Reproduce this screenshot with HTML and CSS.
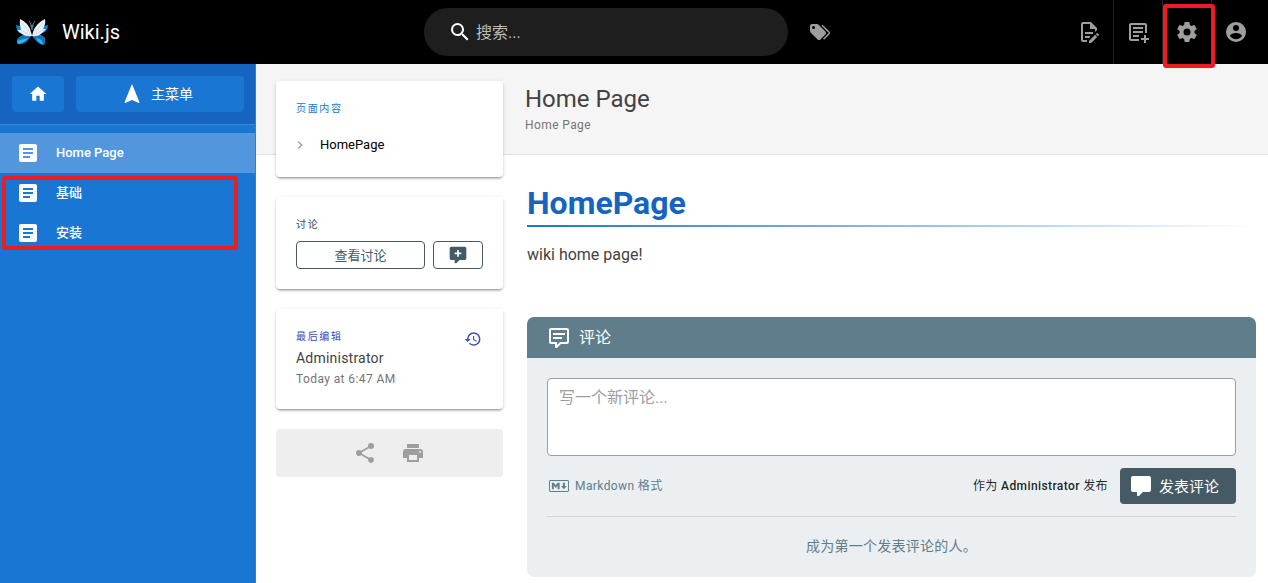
FILE: index.html
```html
<!DOCTYPE html>
<html lang="zh">
<head>
  <meta charset="UTF-8">
  <title>Home Page | Wiki.js</title>
  <link rel="stylesheet" href="styles.css">
</head>
<body>
  <!-- top bar -->
  <header class="topbar">
    <div class="brand">
      <svg class="logo" viewBox="0 0 34 28">
        <path fill="#0288d1" d="M1 7L5 8L14 17L4 15Q1 11 1 7M33 7L29 8L20 17L30 14Q33 11 33 7"/>
        <path fill="#1671b8" d="M17 16Q10 14 2 21Q1 24 3 26Q12 27 17 16M17 17Q25 14 30 20Q31 24 29 27Q21 26 17 17"/>
        <path fill="#29b6f6" d="M13 20Q8 21 2 23L3 26Q10 25 13 20M21 20Q28 21 28 26L29 27Q24 26 21 20"/>
        <path fill="#eceff5" d="M5 1Q14 5 16 14L17 18Q11 19 7 16L2 12L6 12Q4 6 5 1M30 1Q21 5 18 14L17 18Q23 19 27 15L31 11L28 11Q31 6 30 1"/>
        <path fill="none" stroke="#c3cbda" stroke-width=".6" d="M7 5L15 15M5 12L15 17M28 5L19 15M29 11L19 17"/>
        <path fill="none" stroke="#607d8b" stroke-width="1" d="M14 3L16 6L17 12L18 6L20 3M15 8L19 8"/>
      </svg>
      <span>Wiki.js</span>
    </div>
    <div class="search">
      <svg class="icon" viewBox="0 0 24 24"><path d="M9.5,3A6.5,6.5 0 0,1 16,9.5C16,11.11 15.41,12.59 14.44,13.73L14.71,14H15.5L20.5,19L19,20.5L14,15.5V14.71L13.73,14.44C12.59,15.41 11.11,16 9.5,16A6.5,6.5 0 0,1 3,9.5A6.5,6.5 0 0,1 9.5,3M9.5,5C7,5 5,7 5,9.5C5,12 7,14 9.5,14C12,14 14,12 14,9.5C14,7 12,5 9.5,5Z"/></svg>
      <span>搜索...</span>
    </div>
    <svg class="icon tags" viewBox="0 0 24 24"><path d="M5.5,9A1.5,1.5 0 0,0 7,7.5A1.5,1.5 0 0,0 5.5,6A1.5,1.5 0 0,0 4,7.5A1.5,1.5 0 0,0 5.5,9M17.41,11.58C17.77,11.94 18,12.44 18,13C18,13.55 17.78,14.05 17.41,14.41L12.41,19.41C12.05,19.77 11.55,20 11,20C10.45,20 9.95,19.78 9.58,19.41L2.59,12.42C2.22,12.05 2,11.55 2,11V6C2,4.89 2.89,4 4,4H9C9.55,4 10.05,4.22 10.41,4.58L17.41,11.58M13.54,5.71L14.54,4.71L21.41,11.58C21.78,11.94 22,12.45 22,13C22,13.55 21.78,14.05 21.42,14.41L16.04,19.79L15.04,18.79L20.75,13L13.54,5.71Z"/></svg>
    <nav class="actions">
      <a><svg class="icon" viewBox="0 0 24 24"><path d="M8,12H16V14H8V12M10,20H6V4H13V9H18V12.1L20,10.1V8L14,2H6A2,2 0 0,0 4,4V20A2,2 0 0,0 6,22H10V20M8,18H12.1L13,17.1V16H8V18M20.2,13C20.3,13 20.5,13.1 20.6,13.2L21.9,14.5C22.1,14.7 22.1,15.1 21.9,15.3L20.9,16.3L18.8,14.2L19.8,13.2C19.9,13.1 20,13 20.2,13M20.2,16.9L14.1,23H12V20.9L18.1,14.8L20.2,16.9Z"/></svg></a>
      <a><svg class="icon" viewBox="0 0 24 24"><path d="M13 17H7V15H13V17M17 9H7V7H17V9M17 13H7V11H17V13M19 3H5C3.9 3 3 3.9 3 5V19C3 20.1 3.9 21 5 21H13V19H5V5H19V13H21V5C21 3.9 20.1 3 19 3M20 18V15H18V18H15V20H18V23H20V20H23V18H20Z"/></svg></a>
      <a class="settings"><svg class="icon" viewBox="0 0 24 24"><path d="M12,15.5A3.5,3.5 0 0,1 8.5,12A3.5,3.5 0 0,1 12,8.5A3.5,3.5 0 0,1 15.5,12A3.5,3.5 0 0,1 12,15.5M19.43,12.97C19.47,12.65 19.5,12.33 19.5,12C19.5,11.67 19.47,11.34 19.43,11L21.54,9.37C21.73,9.22 21.78,8.95 21.66,8.73L19.66,5.27C19.54,5.05 19.27,4.96 19.05,5.05L16.56,6.05C16.04,5.66 15.5,5.32 14.87,5.07L14.5,2.42C14.46,2.18 14.25,2 14,2H10C9.75,2 9.54,2.18 9.5,2.42L9.13,5.07C8.5,5.32 7.96,5.66 7.44,6.05L4.95,5.05C4.73,4.96 4.46,5.05 4.34,5.27L2.34,8.73C2.21,8.95 2.27,9.22 2.46,9.37L4.57,11C4.53,11.34 4.5,11.67 4.5,12C4.5,12.33 4.53,12.65 4.57,12.97L2.46,14.63C2.27,14.78 2.21,15.05 2.34,15.27L4.34,18.73C4.46,18.95 4.73,19.03 4.95,18.95L7.44,17.94C7.96,18.34 8.5,18.68 9.13,18.93L9.5,21.58C9.54,21.82 9.75,22 10,22H14C14.25,22 14.46,21.82 14.5,21.58L14.87,18.93C15.5,18.67 16.04,18.34 16.56,17.94L19.05,18.95C19.27,19.03 19.54,18.95 19.66,18.73L21.66,15.27C21.78,15.05 21.73,14.78 21.54,14.63L19.43,12.97Z"/></svg><span class="mark mark-settings"></span></a>
      <a><svg class="icon" viewBox="0 0 24 24"><path d="M12,19.2C9.5,19.2 7.29,17.92 6,16C6.03,14 10,12.9 12,12.9C14,12.9 17.97,14 18,16C16.71,17.92 14.5,19.2 12,19.2M12,5A3,3 0 0,1 15,8A3,3 0 0,1 12,11A3,3 0 0,1 9,8A3,3 0 0,1 12,5M12,2A10,10 0 0,0 2,12A10,10 0 0,0 12,22A10,10 0 0,0 22,12C22,6.47 17.5,2 12,2Z"/></svg></a>
    </nav>
  </header>

  <div class="layout">
    <!-- left navigation -->
    <aside class="sidebar">
      <div class="sidebar-head">
        <a class="nav-btn home"><svg class="icon" viewBox="0 0 24 24"><path d="M10,20V14H14V20H19V12H22L12,3L2,12H5V20H10Z"/></svg></a>
        <a class="nav-btn menu"><svg class="icon" viewBox="0 0 24 24"><path d="M12,2L4.5,20.29L5.21,21L12,18L18.79,21L19.5,20.29L12,2Z"/></svg><span>主菜单</span></a>
      </div>
      <div class="nav-list">
        <a class="nav-item active"><svg class="icon" viewBox="0 0 24 24"><path d="M14,17H7V15H14M17,13H7V11H17M17,9H7V7H17M19,3H5C3.89,3 3,3.89 3,5V19A2,2 0 0,0 5,21H19A2,2 0 0,0 21,19V5C21,3.89 20.1,3 19,3Z"/></svg><span>Home Page</span></a>
        <a class="nav-item"><svg class="icon" viewBox="0 0 24 24"><path d="M14,17H7V15H14M17,13H7V11H17M17,9H7V7H17M19,3H5C3.89,3 3,3.89 3,5V19A2,2 0 0,0 5,21H19A2,2 0 0,0 21,19V5C21,3.89 20.1,3 19,3Z"/></svg><span>基础</span></a>
        <a class="nav-item"><svg class="icon" viewBox="0 0 24 24"><path d="M14,17H7V15H14M17,13H7V11H17M17,9H7V7H17M19,3H5C3.89,3 3,3.89 3,5V19A2,2 0 0,0 5,21H19A2,2 0 0,0 21,19V5C21,3.89 20.1,3 19,3Z"/></svg><span>安装</span></a>
        <span class="mark mark-nav"></span>
      </div>
    </aside>

    <main class="page">
      <div class="page-header">
        <h2>Home Page</h2>
        <p>Home Page</p>
      </div>
      <div class="page-body">
        <!-- page info cards -->
        <div class="page-side">
          <div class="card toc">
            <div class="overline blue">页面内容</div>
            <div class="toc-item"><svg class="icon" viewBox="0 0 24 24"><path d="M8.59,16.58L13.17,12L8.59,7.41L10,6L16,12L10,18L8.59,16.58Z"/></svg><span>HomePage</span></div>
          </div>
          <div class="card talk">
            <div class="overline grey">讨论</div>
            <div class="talk-buttons">
              <a class="outlined view">查看讨论</a>
              <a class="outlined add"><svg class="icon" viewBox="0 0 24 24"><path d="M9,22A1,1 0 0,1 8,21V18H4A2,2 0 0,1 2,16V4C2,2.89 2.9,2 4,2H20A2,2 0 0,1 22,4V16A2,2 0 0,1 20,18H13.9L10.2,21.71C10,21.9 9.75,22 9.5,22H9M11,6V9H8V11H11V14H13V11H16V9H13V6H11Z"/></svg></a>
            </div>
          </div>
          <div class="card edited">
            <div>
              <div class="overline indigo">最后编辑</div>
              <div class="author">Administrator</div>
              <div class="date">Today at 6:47 AM</div>
            </div>
            <svg class="icon" viewBox="0 0 24 24"><path d="M13.5,8H12V13L16.28,15.54L17,14.33L13.5,12.25V8M13,3A9,9 0 0,0 4,12H1L4.96,16.03L9,12H6A7,7 0 0,1 13,5A7,7 0 0,1 20,12A7,7 0 0,1 13,19C11.07,19 9.32,18.21 8.06,16.94L6.64,18.36C8.27,20 10.5,21 13,21A9,9 0 0,0 22,12A9,9 0 0,0 13,3"/></svg>
          </div>
          <div class="share">
            <svg class="icon" viewBox="0 0 24 24"><path d="M18,16.08C17.24,16.08 16.56,16.38 16.04,16.85L8.91,12.7C8.96,12.47 9,12.24 9,12C9,11.76 8.96,11.53 8.91,11.3L15.96,7.19C16.5,7.69 17.21,8 18,8A3,3 0 0,0 21,5A3,3 0 0,0 18,2A3,3 0 0,0 15,5C15,5.24 15.04,5.47 15.09,5.7L8.04,9.81C7.5,9.31 6.79,9 6,9A3,3 0 0,0 3,12A3,3 0 0,0 6,15C6.79,15 7.5,14.69 8.04,14.19L15.16,18.34C15.11,18.55 15.08,18.77 15.08,19C15.08,20.61 16.39,21.91 18,21.91C19.61,21.91 20.92,20.61 20.92,19A2.92,2.92 0 0,0 18,16.08Z"/></svg>
            <svg class="icon" viewBox="0 0 24 24"><path d="M18,3H6V7H18M19,12A1,1 0 0,1 18,11A1,1 0 0,1 19,10A1,1 0 0,1 20,11A1,1 0 0,1 19,12M16,19H8V14H16M19,8H5A3,3 0 0,0 2,11V17H6V21H18V17H22V11A3,3 0 0,0 19,8Z"/></svg>
          </div>
        </div>

        <div class="content">
          <h1>HomePage</h1>
          <p class="text">wiki home page!</p>

          <!-- comments -->
          <section class="comments">
            <div class="comments-head">
              <svg class="icon" viewBox="0 0 24 24"><path d="M9,22A1,1 0 0,1 8,21V18H4A2,2 0 0,1 2,16V4C2,2.89 2.9,2 4,2H20A2,2 0 0,1 22,4V16A2,2 0 0,1 20,18H13.9L10.2,21.71C10,21.9 9.75,22 9.5,22H9M10,16V19.08L13.08,16H20V4H4V16H10M6,7H18V9H6V7M6,11H15V13H6V11Z"/></svg>
              <span>评论</span>
            </div>
            <div class="comments-body">
              <div class="new-comment">写一个新评论...</div>
              <div class="comment-bar">
                <svg class="icon" viewBox="0 0 24 24"><path d="M20.56 18H3.44C2.65 18 2 17.37 2 16.59V7.41C2 6.63 2.65 6 3.44 6H20.56C21.35 6 22 6.63 22 7.41V16.59C22 17.37 21.35 18 20.56 18M3.44 6.94C3.18 6.94 2.96 7.15 2.96 7.41V16.6C2.96 16.85 3.18 17.06 3.44 17.06H20.56C20.82 17.06 21.04 16.85 21.04 16.6V7.41C21.04 7.15 20.82 6.94 20.56 6.94H3.44M4.89 15.19V8.81H6.81L8.73 11.16L10.65 8.81H12.58V15.19H10.65V11.53L8.73 13.88L6.81 11.53V15.19H4.89M16.9 15.19L14 12.09H15.94V8.81H17.87V12.09H19.79L16.9 15.19"/></svg>
                <span class="format">Markdown 格式</span>
                <span class="post-as">作为 <strong>Administrator</strong> 发布</span>
                <a class="post-btn"><svg class="icon" viewBox="0 0 24 24"><path d="M9,22A1,1 0 0,1 8,21V18H4A2,2 0 0,1 2,16V4C2,2.89 2.9,2 4,2H20A2,2 0 0,1 22,4V16A2,2 0 0,1 20,18H13.9L10.2,21.71C10,21.9 9.75,22 9.5,22H9Z"/></svg><span>发表评论</span></a>
              </div>
              <div class="empty">成为第一个发表评论的人。</div>
            </div>
          </section>
        </div>
      </div>
    </main>
  </div>
</body>
</html>
```
FILE: styles.css
```css
* {
  box-sizing: border-box;
}
body {
  margin: 0;
  height: 583px;
  overflow: hidden;
  background: #fff;
  color: rgba(0, 0, 0, .87);
  font-family: Roboto, "Noto Sans CJK SC", sans-serif;
  font-size: 16px;
}
h1, h2, p {
  margin: 0;
}
.icon {
  width: 24px;
  height: 24px;
  fill: currentColor;
  flex: none;
}

/* top bar */
.topbar {
  display: flex;
  align-items: center;
  height: 64px;
  background: #000;
  color: #fff;
}
.brand {
  display: flex;
  align-items: center;
  width: 424px;
  padding-left: 15px;
  gap: 13px;
  font-size: 20px;
}
.logo {
  width: 34px;
  height: 28px;
}
.search {
  display: flex;
  align-items: center;
  gap: 4px;
  width: 364px;
  height: 48px;
  padding-left: 24px;
  border-radius: 24px;
  background: #1e1e1e;
}
.search span {
  padding-bottom: 2px;
  color: #bcbcbc;
  font-size: 16px;
}
.tags {
  margin-left: 20px;
  width: 24px;
  color: #9e9e9e;
}
.actions {
  display: flex;
  margin-left: auto;
  padding-right: 8px;
  color: #9e9e9e;
}
.actions a {
  display: flex;
  align-items: center;
  justify-content: center;
  width: 49px;
  height: 64px;
  border-left: 1px solid #212121;
}
.actions a:first-child {
  border-left: none;
}
.settings {
  position: relative;
}

/* red highlight frames */
.mark {
  position: absolute;
  border: 4px solid #ed1c24;
  border-radius: 3px;
  z-index: 5;
}
.mark-settings {
  left: 0;
  top: 4px;
  width: 52px;
  height: 64px;
}
.mark-nav {
  left: 2px;
  top: 51px;
  width: 236px;
  height: 74px;
}

.layout {
  display: flex;
  height: 519px;
}

/* left navigation */
.sidebar {
  width: 256px;
  background: #1976d2;
  border-right: 1px solid #3080d2;
  color: #fff;
}
.sidebar-head {
  display: flex;
  gap: 12px;
  height: 61px;
  padding: 12px 11px 12px 12px;
  background: #1565c0;
  border-bottom: 1px solid #3c88d6;
}
.nav-btn {
  display: flex;
  align-items: center;
  justify-content: center;
  height: 36px;
  border-radius: 4px;
  background: #1976d2;
  font-size: 14px;
}
.home {
  width: 52px;
}
.home .icon {
  width: 20px;
  height: 20px;
}
.menu {
  flex: 1;
  gap: 7px;
  padding-right: 7px;
}
.menu span {
  padding-bottom: 3px;
}
.nav-list {
  position: relative;
  padding-top: 8px;
}
.nav-item {
  display: flex;
  align-items: center;
  gap: 16px;
  height: 40px;
  padding-left: 16px;
  font-size: 13px;
  font-weight: 500;
}
.nav-item span {
  padding-bottom: 4px;
}
.nav-item.active span {
  padding-bottom: 2px;
}
.nav-item.active {
  background: #5297de;
}

/* page */
.page {
  flex: 1;
  min-width: 0;
}
.page-header {
  height: 91px;
  padding: 19px 0 0 269px;
  background: #f5f5f5;
  border-bottom: 1px solid #e0e0e0;
}
.page-header h2 {
  font-size: 24px;
  font-weight: 400;
  line-height: 32px;
  color: #424242;
}
.page-header p {
  font-size: 12px;
  line-height: 20px;
  letter-spacing: .4px;
  color: #757575;
}
.page-body {
  display: flex;
  gap: 24px;
  padding: 0 12px 0 20px;
}
.page-side {
  display: flex;
  flex-direction: column;
  gap: 20px;
  width: 227px;
  margin-top: -74px;
}
.card {
  padding: 20px;
  border-radius: 4px;
  background: #fff;
  box-shadow: 0 3px 1px -2px rgba(0, 0, 0, .2), 0 2px 2px 0 rgba(0, 0, 0, .14), 0 1px 5px 0 rgba(0, 0, 0, .12);
}
.overline {
  font-size: 10px;
  line-height: 16px;
  letter-spacing: 1.67px;
}
.blue {
  color: #1976d2;
}
.grey {
  color: #37474f;
}
.indigo {
  color: #3949ab;
}
.toc {
  height: 96px;
}
.toc-item {
  display: flex;
  align-items: center;
  gap: 12px;
  margin: 16px 0 0 -4px;
  height: 24px;
  font-size: 13px;
}
.toc-item .icon {
  width: 16px;
  height: 16px;
  color: #9e9e9e;
}
.toc-item span {
  padding-bottom: 2px;
  color: #000;
}
.talk {
  height: 92px;
}
.talk-buttons {
  display: flex;
  gap: 8px;
  margin-top: 8px;
}
.outlined {
  display: flex;
  align-items: center;
  justify-content: center;
  height: 28px;
  border: 1px solid #455a64;
  border-radius: 4px;
  color: #455a64;
  font-size: 13px;
}
.view {
  width: 129px;
  padding-bottom: 2px;
}
.add {
  width: 50px;
}
.add .icon {
  width: 20px;
  height: 20px;
}
.edited {
  display: flex;
  justify-content: space-between;
  height: 100px;
}
.edited .icon {
  width: 18px;
  height: 18px;
  margin: 1px 1px 0 0;
  color: #3f51b5;
}
.author {
  font-size: 14px;
  line-height: 22px;
  letter-spacing: .22px;
  margin-top: 2px;
  color: #424242;
}
.date {
  font-size: 12px;
  line-height: 20px;
  letter-spacing: .4px;
  color: #757575;
}
.share {
  display: flex;
  align-items: center;
  justify-content: center;
  gap: 24px;
  height: 48px;
  padding-right: 1px;
  border-radius: 4px;
  background: #eee;
  color: #9e9e9e;
}

/* article */
.content {
  flex: 1;
  padding-top: 28px;
}
.content h1 {
  height: 44px;
  font-size: 32px;
  font-weight: 700;
  line-height: 40px;
  color: #1565c0;
  background: linear-gradient(to right, #1976d2, rgba(25, 118, 210, 0)) no-repeat 0 100% / 100% 2px;
}
.text {
  margin-top: 16px;
  font-size: 16px;
  line-height: 24px;
  color: #424242;
}

/* comments */
.comments {
  margin-top: 50px;
}
.comments-head {
  display: flex;
  align-items: center;
  gap: 8px;
  height: 41px;
  padding-left: 20px;
  border-radius: 7px 7px 0 0;
  background: #607d8b;
  color: #fff;
}
.comments-head span {
  padding-bottom: 4px;
}
.comments-body {
  height: 219px;
  padding: 20px;
  border-radius: 0 0 7px 7px;
  background: #eceff1;
}
.new-comment {
  height: 78px;
  padding: 7px 11px;
  border: 1px solid #9e9e9e;
  border-radius: 4px;
  background: #fff;
  line-height: 24px;
  color: #9e9e9e;
}
.comment-bar {
  display: flex;
  align-items: center;
  height: 61px;
  border-bottom: 1px solid #cfd4d6;
  font-size: 12px;
}
.format {
  margin-left: 4px;
  padding-bottom: 3px;
  letter-spacing: .4px;
  color: #607d8b;
}
.comment-bar > .icon {
  color: #607d8b;
}
.post-as {
  margin-left: auto;
  padding-bottom: 3px;
  letter-spacing: .4px;
}
.post-as strong {
  font-weight: 500;
}
.post-btn {
  display: flex;
  align-items: center;
  gap: 6px;
  width: 116px;
  height: 36px;
  margin-left: 12px;
  padding-left: 9px;
  border-radius: 4px;
  background: #455a64;
  color: #fff;
  font-size: 15px;
}
.post-btn span {
  padding-bottom: 2px;
}
.empty {
  padding-top: 18px;
  font-size: 14px;
  line-height: 22px;
  letter-spacing: .25px;
  text-align: center;
  color: #607d8b;
}
```
